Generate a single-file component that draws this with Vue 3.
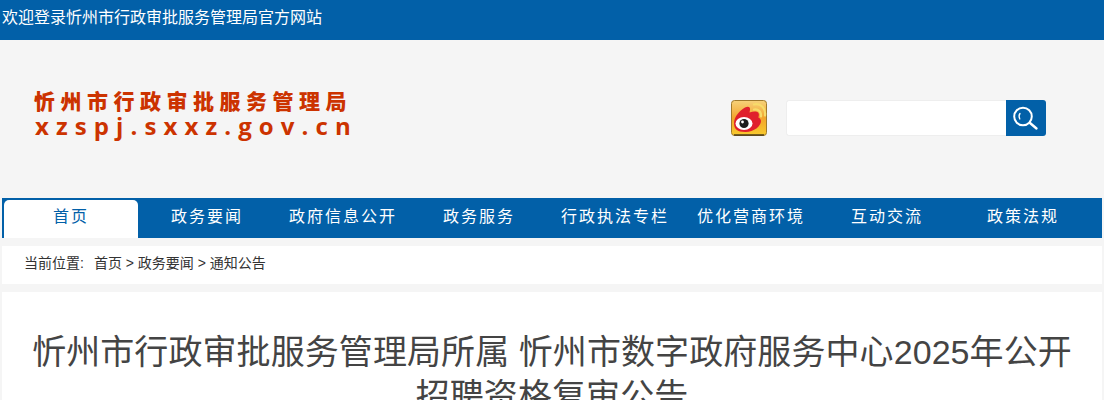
<template>
  <div class="page">
    <div class="top-bar">欢迎登录忻州市行政审批服务管理局官方网站</div>

    <header class="site-header">
      <div class="logo">
        <div class="logo-name">忻州市行政审批服务管理局</div>
        <div class="logo-url">xzspj.sxxz.gov.cn</div>
      </div>
      <div class="header-tools">
        <svg class="weibo" viewBox="0 0 36 36" aria-hidden="true">
          <defs>
            <linearGradient id="weibo-bg" x1="0" y1="0" x2="0" y2="1">
              <stop offset="0" stop-color="#f6d27a" />
              <stop offset="0.5" stop-color="#f3a52c" />
              <stop offset="1" stop-color="#f8cb2e" />
            </linearGradient>
          </defs>
          <rect x="0.5" y="0.5" width="35" height="35" rx="3" fill="url(#weibo-bg)" stroke="#a07a2c" />
          <path d="M3 35h30" stroke="#4a3a1a" stroke-width="1.500" />
          <path d="M3 23c0-6 6-13 11-15.500 3-1.500 5.500-1 5 2.500l-.5 2.500c4-1.500 8-1.500 9 .5.800 1.500.3 3-.2 4.500 1.500.5 2.700 2 2.700 3.500 0 5-7 11-15.500 11S3 29 3 23z" fill="#e0202c" />
          <ellipse cx="13" cy="23.500" rx="8.500" ry="6.500" fill="#fff" />
          <circle cx="13" cy="23.500" r="4.600" fill="#1c1c1c" />
          <circle cx="11.500" cy="22" r="1.400" fill="#fff" />
          <path d="M23 9.500c4-1 7.500 2 7 7" fill="none" stroke="#f7dc6a" stroke-width="2.200" stroke-linecap="round" />
          <path d="M23 4.500c7-1.500 12 4 11 11" fill="none" stroke="#f7dc6a" stroke-width="2.200" stroke-linecap="round" />
        </svg>
        <div class="search">
          <input class="search-input" type="text" />
          <button class="search-btn" type="button" aria-label="搜索">
            <svg viewBox="0 0 40 36" width="40" height="36" aria-hidden="true">
              <circle cx="17" cy="16.500" r="8.800" fill="none" stroke="#fff" stroke-width="2" />
              <path d="M24 23l6.500 5.500" stroke="#fff" stroke-width="2.400" stroke-linecap="round" />
              <path d="M14 13.500c-1.200 1.500-1.200 3.500-.2 5.500" fill="none" stroke="#fff" stroke-width="1.300" stroke-linecap="round" />
            </svg>
          </button>
        </div>
      </div>
    </header>

    <nav class="main-nav">
      <a
        v-for="(item, i) in navItems"
        :key="item"
        :class="['nav-item', { active: i === 0 }]"
      >{{ item }}</a>
    </nav>

    <div class="crumbs">
      <span class="crumbs-label">当前位置:</span>首页 &gt; 政务要闻 &gt; 通知公告
    </div>

    <main class="article">
      <h1 class="article-title">忻州市行政审批服务管理局所属 忻州市数字政府服务中心2025年公开招聘资格复审公告</h1>
    </main>
  </div>
</template>

<script setup>
const navItems = ['首页', '政务要闻', '政府信息公开', '政务服务', '行政执法专栏', '优化营商环境', '互动交流', '政策法规']
</script>

<style>
html,
body {
  margin: 0;
  background: #f5f5f5;
}
</style>

<style scoped>
.page {
  height: 400px;
  overflow: hidden;
  background: #f5f5f5;
  font-family: "Liberation Sans", "Noto Sans CJK SC", sans-serif;
}

.top-bar {
  height: 40px;
  padding-left: 2px;
  line-height: 36px;
  font-size: 16px;
  color: #fff;
  background: #0260a8;
}

.site-header {
  height: 158px;
  display: flex;
  align-items: center;
  justify-content: space-between;
  padding: 0 58px 2px 34px;
  box-sizing: border-box;
}

.logo {
  display: grid;
  color: #cc3300;
  margin-bottom: 11px;
}

.logo-name {
  font-size: 21px;
  line-height: 26px;
  font-weight: 900;
  letter-spacing: 5.500px;
  white-space: nowrap;
}

.logo-url {
  padding-left: 1px;
  font-family: "Open Sans", sans-serif;
  font-size: 24px;
  line-height: 22px;
  font-weight: 700;
  letter-spacing: 7.100px;
  white-space: nowrap;
}

.header-tools {
  display: flex;
  align-items: center;
  gap: 19px;
}

.weibo {
  width: 36px;
  height: 36px;
  display: block;
}

.search {
  display: flex;
  width: 260px;
  height: 36px;
}

.search-input {
  flex: 1;
  min-width: 0;
  box-sizing: border-box;
  border: 1px solid #eee;
  border-right: none;
  border-radius: 3px 0 0 3px;
  background: #fff;
  padding: 0;
}

.search-btn {
  width: 40px;
  height: 36px;
  padding: 0;
  border: none;
  border-radius: 0 3px 3px 0;
  background: #0260a8;
  display: block;
}

.search-btn svg {
  display: block;
}

.main-nav {
  height: 40px;
  margin: 0 2px;
  padding-left: 1px;
  display: grid;
  grid-template-columns: repeat(8, 136px);
  background: #0260a8;
}

.nav-item {
  line-height: 38px;
  text-align: center;
  font-size: 16px;
  letter-spacing: 2px;
  color: #fff;
}

.nav-item.active {
  margin: 2px 1px 0 1px;
  border-radius: 5px 5px 0 0;
  line-height: 34px;
  background: #fff;
  color: #0260a8;
}

.crumbs {
  height: 38px;
  margin: 8px 2px 0;
  padding: 0 0 4px 22px;
  box-sizing: border-box;
  line-height: 34px;
  background: #fff;
  font-size: 14px;
  color: #333;
  white-space: pre-wrap;
}

.crumbs-label {
  margin-right: 10px;
}

.article {
  margin: 8px 2px 0;
  padding: 38px 30px 0;
  background: #fff;
}

.article-title {
  margin: 0;
  text-align: center;
  font-size: 34px;
  line-height: 44px;
  font-weight: 400;
  letter-spacing: 0.080px;
  color: #444;
}
</style>
